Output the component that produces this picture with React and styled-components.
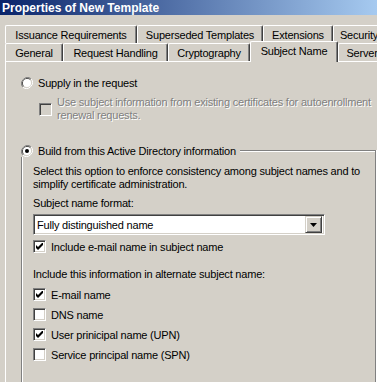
import React from "react";
import styled, { createGlobalStyle } from "styled-components";

const GlobalStyle = createGlobalStyle`
  html, body {
    margin: 0;
    padding: 0;
    overflow: hidden;
    background: #d4d0c8;
  }
  body {
    font-family: "Liberation Sans", Arial, sans-serif;
    font-size: 11px;
    letter-spacing: -0.2px;
    color: #000;
  }
`;

const tabRows = [
  [
    { label: "Issuance Requirements", width: 132 },
    { label: "Superseded Templates", width: 126 },
    { label: "Extensions", width: 70 },
    { label: "Security", width: 52 },
  ],
  [
    { label: "General", width: 58 },
    { label: "Request Handling", width: 105 },
    { label: "Cryptography", width: 82 },
    { label: "Subject Name", width: 88, selected: true },
    { label: "Server", width: 48 },
  ],
];

const altNames = [
  { label: "E-mail name", checked: true },
  { label: "DNS name", checked: false },
  { label: "User prinicipal name (UPN)", checked: true },
  { label: "Service principal name (SPN)", checked: false },
];

const Radio = ({ checked }) => (
  <RadioIcon width="12" height="12" viewBox="0 0 12 12">
    <path d="M10.2 1.8A6 6 0 0 0 1.8 10.2" fill="none" stroke="#808080" strokeWidth="1" />
    <path d="M1.8 10.2A6 6 0 0 0 10.2 1.8" fill="none" stroke="#fff" strokeWidth="1" />
    <path d="M9.5 2.5A5 5 0 0 0 2.5 9.5" fill="none" stroke="#404040" strokeWidth="1" />
    <path d="M2.5 9.5A5 5 0 0 0 9.5 2.5" fill="none" stroke="#d4d0c8" strokeWidth="1" />
    <circle cx="6" cy="6" r="4" fill="#fff" />
    {checked && <circle cx="6" cy="6" r="2" fill="#000" />}
  </RadioIcon>
);

const Check = ({ checked, disabled }) => (
  <CheckBox $disabled={disabled}>
    {checked && (
      <svg width="7" height="7" viewBox="0 0 7 7">
        <path d="M0 2v3l2 2 5-5V-1L2 4z" fill="#000" />
      </svg>
    )}
  </CheckBox>
);

const App = () => {
  return (
    <>
      <GlobalStyle />
      <Window>
        <TitleBar>Properties of New Template</TitleBar>
        <TabArea>
          {tabRows.map((row, i) => (
            <TabRow key={i}>
              {row.map((tab) => (
                <Tab key={tab.label} $selected={tab.selected} style={{ width: tab.width }}>
                  {tab.label}
                </Tab>
              ))}
            </TabRow>
          ))}
        </TabArea>
        <Panel>
          <RadioRow>
            <Radio />
            <span>Supply in the request</span>
          </RadioRow>
          <DisabledRow>
            <Check disabled />
            <DisabledText>
              Use subject information from existing certificates for autoenrollment
              <br />
              renewal requests.
            </DisabledText>
          </DisabledRow>

          <Group>
            <GroupHeader>
              <RadioRow>
                <Radio checked />
                <span>Build from this Active Directory information</span>
              </RadioRow>
              <GroupLine />
            </GroupHeader>
            <GroupBody>
              <Paragraph>
                Select this option to enforce consistency among subject names and to
                <br />
                simplify certificate administration.
              </Paragraph>
              <FieldLabel>Subject name format:</FieldLabel>
              <Combo>
                <ComboValue>Fully distinguished name</ComboValue>
                <ComboButton>
                  <svg width="7" height="4" viewBox="0 0 7 4">
                    <path d="M0 0h7L3.5 4z" fill="#000" />
                  </svg>
                </ComboButton>
              </Combo>
              <CheckRow $top={5}>
                <Check checked />
                <span>Include e-mail name in subject name</span>
              </CheckRow>

              <SectionLabel>Include this information in alternate subject name:</SectionLabel>
              <CheckList>
                {altNames.map((item) => (
                  <CheckRow key={item.label}>
                    <Check checked={item.checked} />
                    <span>{item.label}</span>
                  </CheckRow>
                ))}
              </CheckList>
            </GroupBody>
          </Group>
        </Panel>
      </Window>
    </>
  );
};

const Window = styled.div`
  display: flex;
  flex-direction: column;
  height: 100vh;
  width: 100vw;
  overflow: hidden;
`;

const TitleBar = styled.div`
  height: 15px;
  flex-shrink: 0;
  padding-left: 2px;
  display: flex;
  align-items: center;
  background: linear-gradient(to right, #0a246a, #a6caf0);
  color: #fff;
  font-weight: bold;
  font-size: 12px;
  letter-spacing: 0;
  white-space: nowrap;
`;

const TabArea = styled.div`
  padding: 10px 0 0 5px;
  flex-shrink: 0;
`;

const TabRow = styled.div`
  display: flex;
  align-items: flex-end;
  height: 18px;
  white-space: nowrap;
`;

const Tab = styled.div`
  flex-shrink: 0;
  box-sizing: border-box;
  height: ${(p) => (p.$selected ? "21px" : "18px")};
  margin-bottom: ${(p) => (p.$selected ? "-1px" : "0")};
  position: relative;
  z-index: ${(p) => (p.$selected ? 1 : 0)};
  display: flex;
  align-items: center;
  justify-content: center;
  padding-bottom: ${(p) => (p.$selected ? "2px" : "0")};
  background: #d4d0c8;
  border-top: 1px solid #fff;
  border-left: 1px solid #fff;
  border-right: 1px solid #404040;
  box-shadow: inset -1px 0 #808080;
  border-radius: 2px 2px 0 0;
`;

const Panel = styled.div`
  flex: 1;
  display: flex;
  flex-direction: column;
  margin-left: 5px;
  border-top: 1px solid #fff;
  border-left: 1px solid #fff;
  padding: 14px 1px 0 15px;
`;

const RadioIcon = styled.svg`
  flex-shrink: 0;
  display: block;
`;

const RadioRow = styled.div`
  display: flex;
  align-items: center;
  gap: 5px;
  height: 13px;
  white-space: nowrap;
`;

const CheckBox = styled.div`
  width: 13px;
  height: 13px;
  flex-shrink: 0;
  box-sizing: border-box;
  border: 1px solid;
  border-color: #808080 #fff #fff #808080;
  box-shadow: inset 1px 1px #404040, inset -1px -1px #d4d0c8;
  background: ${(p) => (p.$disabled ? "#d4d0c8" : "#fff")};
  display: flex;
  align-items: center;
  justify-content: center;
`;

const DisabledRow = styled.div`
  display: flex;
  align-items: center;
  gap: 5px;
  margin: 7px 0 0 18px;
`;

const DisabledText = styled.div`
  line-height: 13px;
  color: #808080;
  text-shadow: 1px 1px #fff;
  white-space: nowrap;
`;

const Group = styled.div`
  flex: 1;
  display: flex;
  flex-direction: column;
  margin-top: 22px;
`;

const GroupHeader = styled.div`
  display: flex;
  align-items: flex-end;
`;

const GroupLine = styled.div`
  flex: 1;
  height: 6px;
  margin-left: 4px;
  border-top: 1px solid #808080;
  border-right: 1px solid #808080;
  box-shadow: inset 0 1px #fff, 1px 0 #fff;
`;

const GroupBody = styled.div`
  flex: 1;
  border-left: 1px solid #808080;
  border-right: 1px solid #808080;
  box-shadow: inset 1px 0 #fff, 1px 0 #fff;
  padding: 8px 0 0 11px;
`;

const Paragraph = styled.div`
  line-height: 13px;
  white-space: nowrap;
`;

const FieldLabel = styled.div`
  margin-top: 6px;
  line-height: 13px;
`;

const Combo = styled.div`
  margin-top: 4px;
  width: 292px;
  height: 21px;
  box-sizing: border-box;
  border: 1px solid;
  border-color: #808080 #fff #fff #808080;
  box-shadow: inset 1px 1px #404040, inset -1px -1px #d4d0c8;
  background: #fff;
  display: flex;
  align-items: center;
  padding: 2px;
`;

const ComboValue = styled.div`
  flex: 1;
  padding-left: 1px;
`;

const ComboButton = styled.div`
  width: 17px;
  height: 17px;
  box-sizing: border-box;
  background: #d4d0c8;
  border: 1px solid;
  border-color: #d4d0c8 #404040 #404040 #d4d0c8;
  box-shadow: inset 1px 1px #fff, inset -1px -1px #808080;
  display: flex;
  align-items: center;
  justify-content: center;
`;

const CheckRow = styled.div`
  display: flex;
  align-items: center;
  gap: 5px;
  height: 13px;
  margin-top: ${(p) => p.$top || 0}px;
  white-space: nowrap;
`;

const SectionLabel = styled.div`
  margin-top: 15px;
  line-height: 13px;
`;

const CheckList = styled.div`
  display: flex;
  flex-direction: column;
  gap: 7px;
  margin-top: 7px;
`;

export default App;
